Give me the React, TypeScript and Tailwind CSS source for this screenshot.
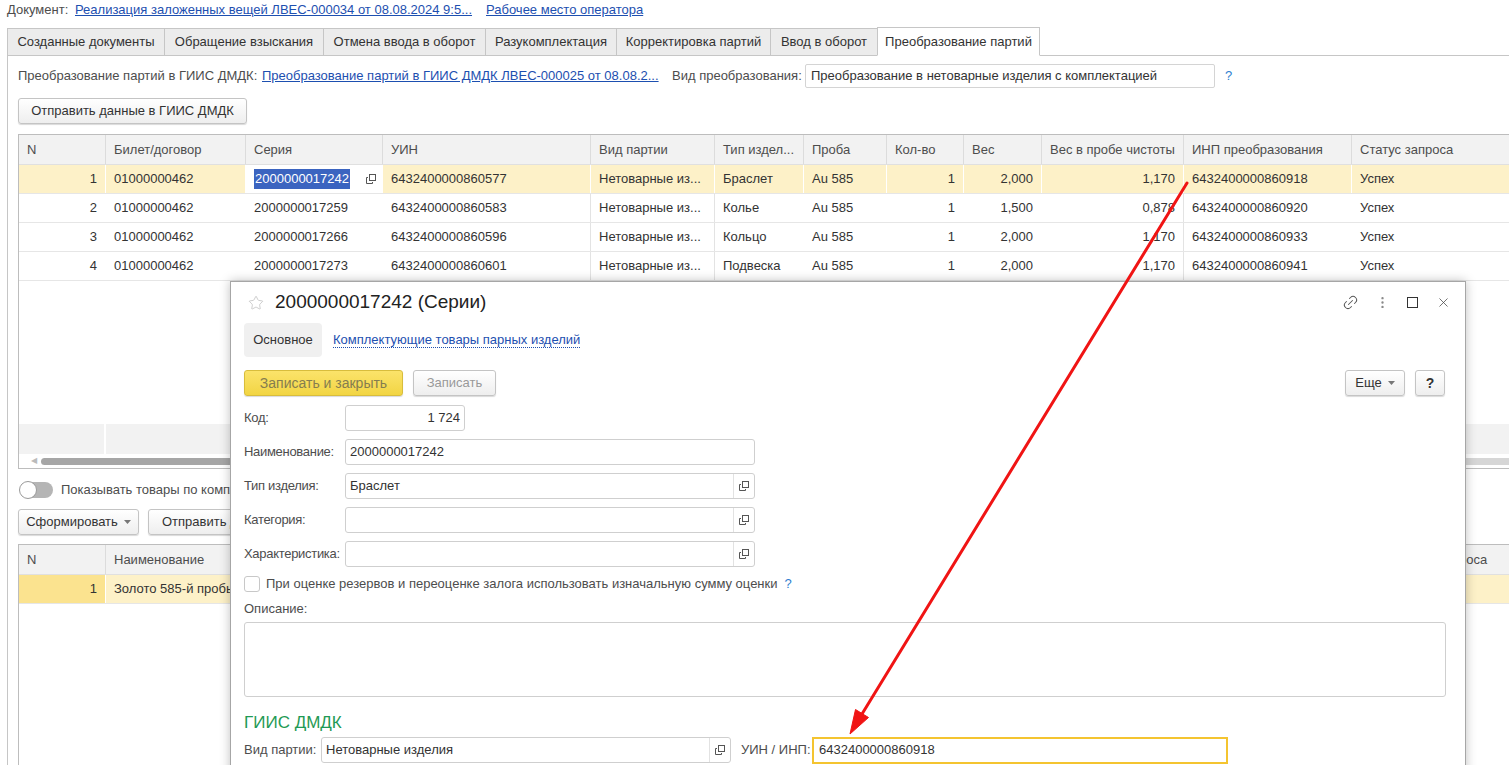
import React from 'react';
import { Link2, EllipsisVertical, X, Star } from 'lucide-react';

type Col = { title: string; w: number; right?: boolean; line?: boolean };

const cols: Col[] = [
    { title: 'N', w: 87, right: true },
    { title: 'Билет/договор', w: 140 },
    { title: 'Серия', w: 137 },
    { title: 'УИН', w: 208, line: true },
    { title: 'Вид партии', w: 124, line: true },
    { title: 'Тип издел...', w: 89 },
    { title: 'Проба', w: 83 },
    { title: 'Кол-во', w: 77, right: true },
    { title: 'Вес', w: 78, right: true },
    { title: 'Вес в пробе чистоты', w: 142, right: true, line: true },
    { title: 'ИНП преобразования', w: 168 },
    { title: 'Статус запроса', w: 170 },
];

const rows = [
    ['1', '01000000462', '2000000017242', '6432400000860577', 'Нетоварные из...', 'Браслет', 'Au 585', '1', '2,000', '1,170', '6432400000860918', 'Успех'],
    ['2', '01000000462', '2000000017259', '6432400000860583', 'Нетоварные из...', 'Колье', 'Au 585', '1', '1,500', '0,878', '6432400000860920', 'Успех'],
    ['3', '01000000462', '2000000017266', '6432400000860596', 'Нетоварные из...', 'Кольцо', 'Au 585', '1', '2,000', '1,170', '6432400000860933', 'Успех'],
    ['4', '01000000462', '2000000017273', '6432400000860601', 'Нетоварные из...', 'Подвеска', 'Au 585', '1', '2,000', '1,170', '6432400000860941', 'Успех'],
];

const tabs = [
    { t: 'Созданные документы', w: 157 },
    { t: 'Обращение взыскания', w: 159 },
    { t: 'Отмена ввода в оборот', w: 162 },
    { t: 'Разукомплектация', w: 131 },
    { t: 'Корректировка партий', w: 154 },
    { t: 'Ввод в оборот', w: 107 },
    { t: 'Преобразование партий', w: 163, active: true },
];

const CopyIcon = () => (
    <svg width="10" height="10" viewBox="0 0 10 10" fill="none" stroke="#555" strokeWidth="1">
        <rect x="3.5" y="0.5" width="6" height="6" />
        <path d="M2 3.5H0.5V9.5H6.5V8" />
    </svg>
);

const Caret = () => (
    <svg width="7" height="4" viewBox="0 0 7 4" className="ml-[6px]">
        <path d="M0 0H7L3.5 4Z" fill="#777" />
    </svg>
);

const Btn: React.FC<{ className?: string; children: React.ReactNode }> = ({ className = '', children }) => (
    <div className={`h-[26px] shrink-0 flex items-center justify-center rounded-[3px] border border-[#c4c4c4] bg-gradient-to-b from-white to-[#eeeeee] shadow-[0_1px_1px_rgba(0,0,0,0.15)] text-[#333] whitespace-nowrap ${className}`}>
        {children}
    </div>
);

const Field: React.FC<{ w: string; value?: string; right?: boolean; pick?: boolean; className?: string }> = ({ w, value = '', right, pick, className = '' }) => (
    <div className={`h-[26px] ${w} shrink-0 flex items-stretch rounded-[3px] border border-[#cfcfcf] bg-white ${className}`}>
        <div className={`flex-1 flex items-center px-[4px] text-[#333] ${right ? 'justify-end' : ''}`}>{value}</div>
        {pick && (
            <div className="w-[21px] border-l border-[#e2e2e2] flex items-center justify-center">
                <CopyIcon />
            </div>
        )}
    </div>
);

const FormRow: React.FC<{ label: string; children: React.ReactNode }> = ({ label, children }) => (
    <div className="flex items-center h-[26px]">
        <div className="w-[101px] shrink-0 text-[#4d4d4d] whitespace-nowrap tracking-[-0.3px]">{label}</div>
        {children}
    </div>
);

export default function App() {
    return (
        <div className="relative w-[1509px] h-[765px] overflow-hidden bg-white text-[13px] text-[#333] font-['Liberation_Sans',Arial,sans-serif]">
            {/* header */}
            <div className="h-[20px] flex items-center pl-[7px] whitespace-nowrap">
                <span className="w-[68px] text-[#4d4d4d]">Документ:</span>
                <span className="w-[411px] text-[#1d4fb0] underline">Реализация заложенных вещей ЛВЕС-000034 от 08.08.2024 9:5...</span>
                <span className="text-[#1d4fb0] underline">Рабочее место оператора</span>
            </div>

            {/* tabs */}
            <div className="mt-[8px] h-[27px] flex items-end pl-[7px] relative z-10">
                {tabs.map((tab) => (
                    <div
                        key={tab.t}
                        style={{ width: tab.w }}
                        className={`flex items-center justify-center border border-[#c6c6c6] border-r-0 last:border-r whitespace-nowrap ${tab.active ? 'h-[29px] bg-white border-b-white -mb-px text-[#333]' : 'h-[27px] bg-[#ececec] border-b-0 text-[#333]'}`}
                    >
                        {tab.t}
                    </div>
                ))}
            </div>

            {/* panel */}
            <div className="ml-[7px] border-l border-t border-[#c6c6c6] pl-[10px] h-[720px]">
                <div className="mt-[8px] h-[24px] flex items-center whitespace-nowrap">
                    <span className="w-[244px] text-[#4d4d4d]">Преобразование партий в ГИИС ДМДК:</span>
                    <span className="w-[410px] text-[#1d4fb0] underline">Преобразование партий в ГИИС ДМДК ЛВЕС-000025 от 08.08.2...</span>
                    <span className="w-[133px] text-[#4d4d4d]">Вид преобразования:</span>
                    <div className="w-[410px] h-[24px] border border-[#d4d4d4] rounded-[2px] flex items-center px-[5px] text-[#333]">
                        Преобразование в нетоварные изделия с комплектацией
                    </div>
                    <span className="ml-[10px] text-[#2f7fd0]">?</span>
                </div>

                <Btn className="mt-[10px] w-[229px]">Отправить данные в ГИИС ДМДК</Btn>

                {/* table 1 */}
                <div className="mt-[10px] w-[1510px] h-[335px] border border-[#bdbdbd] flex flex-col">
                    <div className="h-[30px] flex bg-[#f2f2f2] border-b border-[#e0e0e0] text-[#4d4d4d]">
                        {cols.map((c) => (
                            <div key={c.title} style={{ width: c.w }} className="shrink-0 flex items-center px-[8px] border-r border-[#dcdcdc] whitespace-nowrap">
                                {c.title}
                            </div>
                        ))}
                    </div>
                    {rows.map((r, ri) => {
                        const sel = ri === 0;
                        return (
                            <div key={ri} className={`flex h-[29px] border-b border-[#e6e6e6] ${sel ? 'bg-[#fdf1c8]' : ''}`}>
                                {r.map((v, ci) => {
                                    const c = cols[ci];
                                    const serial = sel && ci === 2;
                                    const line = sel ? 'border-white' : c.line ? 'border-[#e3e3e3]' : 'border-transparent';
                                    return (
                                        <div
                                            key={ci}
                                            style={{ width: c.w }}
                                            className={`shrink-0 flex items-center px-[8px] border-r ${line} whitespace-nowrap ${c.right ? 'justify-end' : ''} ${serial ? 'bg-white justify-between pr-[6px]' : ''}`}
                                        >
                                            {serial ? (
                                                <>
                                                    <span className="bg-[#3b64c0] text-white px-px">{v}</span>
                                                    <CopyIcon />
                                                </>
                                            ) : (
                                                v
                                            )}
                                        </div>
                                    );
                                })}
                            </div>
                        );
                    })}
                    <div className="flex-1" />
                    <div className="h-[30px] flex bg-[#f2f2f2]">
                        <div className="w-[87px] border-r-2 border-white" />
                        <div className="flex-1" />
                    </div>
                    <div className="h-[14px] flex items-center">
                        <span className="w-[22px] text-[8px] text-[#bbb] text-right pr-[4px]">◀</span>
                        <div className="w-[1150px] h-[7px] rounded-full bg-[#a6a6a6]" />
                        <div className="flex-1 h-[7px] bg-[#d6d6d6]" />
                    </div>
                </div>

                {/* toggle; the dialog covers everything right of x=230 */}
                <div className="mt-[12px] h-[17px] flex items-center">
                    <div className="relative shrink-0 w-[33px] h-[16px] rounded-full bg-[#b5b5b5] ml-[2px]">
                        <div className="absolute -left-px -top-px w-[18px] h-[18px] rounded-full bg-white border border-[#9a9a9a]" />
                    </div>
                    <span className="ml-[8px] text-[#4d4d4d] whitespace-nowrap">Показывать товары по компл</span>
                </div>

                <div className="mt-[11px] flex gap-[9px]">
                    <Btn className="w-[121px]">
                        Сформировать
                        <Caret />
                    </Btn>
                    <Btn className="w-[229px] justify-start! pl-[13px]">Отправить д</Btn>
                </div>

                {/* table 2 */}
                <div className="mt-[9px] w-[1510px] h-[240px] border border-[#bdbdbd]">
                    <div className="h-[30px] flex bg-[#f2f2f2] border-b border-[#e0e0e0] text-[#4d4d4d]">
                        <div className="w-[87px] shrink-0 flex items-center px-[8px] border-r border-[#dcdcdc]">N</div>
                        <div className="w-[1280px] shrink-0 flex items-center px-[8px] border-r border-[#dcdcdc]">Наименование</div>
                        <div className="flex-1 flex items-center px-[8px] whitespace-nowrap">Статус запроса</div>
                    </div>
                    <div className="h-[29px] flex bg-[#fdf1c8] border-b border-[#e6e6e6]">
                        <div className="w-[87px] shrink-0 flex items-center justify-end px-[8px] bg-[#fbe38f] border-r border-white">1</div>
                        <div className="flex items-center px-[8px] whitespace-nowrap">Золото 585-й пробы</div>
                    </div>
                </div>
            </div>

            {/* dialog */}
            <div className="absolute left-[230px] top-[281px] w-[1236px] h-[500px] bg-white border border-[#a6a6a6] shadow-[0_0_10px_rgba(0,0,0,0.25)] z-20 flex flex-col">
                <div className="h-[41px] flex items-center pl-[17px] pr-[14px]">
                    <Star size={16} strokeWidth={1} color="#b5b5b5" />
                    <span className="ml-[11px] text-[19px] text-[#222] whitespace-nowrap">2000000017242 (Серии)</span>
                    <div className="ml-auto flex items-center">
                        <Link2 size={17} strokeWidth={1.4} color="#555" className="-rotate-45" />
                        <EllipsisVertical size={15} strokeWidth={1.8} color="#888" className="ml-[16px]" />
                        <div className="ml-[17px] w-[11px] h-[11px] border border-[#333]" />
                        <X size={15} strokeWidth={1.2} color="#444" className="ml-[18px]" />
                    </div>
                </div>

                <div className="pl-[13px] pr-[20px] flex flex-col">
                    <div className="h-[34px] flex items-center">
                        <div className="w-[78px] h-[34px] rounded-[4px] bg-[#f0f0f0] flex items-center justify-center text-[#333]">Основное</div>
                        <span className="ml-[11px] text-[#1d4fb0] border-b border-dotted border-[#1d4fb0] leading-[14px]">Комплектующие товары парных изделий</span>
                    </div>

                    <div className="mt-[13px] flex items-center">
                        <div className="w-[159px] h-[26px] rounded-[3px] border border-[#d8bd3c] bg-gradient-to-b from-[#fbe36a] to-[#f2d542] shadow-[0_1px_1px_rgba(0,0,0,0.15)] flex items-center justify-center text-[14px] text-[#857d4f]">
                            Записать и закрыть
                        </div>
                        <Btn className="ml-[10px] w-[83px]">
                            <span className="text-[#999]">Записать</span>
                        </Btn>
                        <Btn className="ml-auto w-[60px]">
                            Еще
                            <Caret />
                        </Btn>
                        <Btn className="ml-[10px] w-[30px] text-[14px] font-bold">?</Btn>
                    </div>

                    <div className="mt-[9px] flex flex-col gap-[8px]">
                        <FormRow label="Код:">
                            <Field w="w-[120px]" value="1 724" right />
                        </FormRow>
                        <FormRow label="Наименование:">
                            <Field w="w-[410px]" value="2000000017242" />
                        </FormRow>
                        <FormRow label="Тип изделия:">
                            <Field w="w-[410px]" value="Браслет" pick />
                        </FormRow>
                        <FormRow label="Категория:">
                            <Field w="w-[410px]" pick />
                        </FormRow>
                        <FormRow label="Характеристика:">
                            <Field w="w-[410px]" pick />
                        </FormRow>
                    </div>

                    <div className="mt-[9px] h-[16px] flex items-center">
                        <div className="w-[16px] h-[16px] rounded-[3px] border border-[#c8c8c8] bg-white" />
                        <span className="ml-[6px] text-[#4d4d4d] whitespace-nowrap">При оценке резервов и переоценке залога использовать изначальную сумму оценки</span>
                        <span className="ml-[7px] text-[#2f7fd0]">?</span>
                    </div>

                    <div className="mt-[9px] h-[16px] flex items-center text-[#4d4d4d]">Описание:</div>
                    <div className="mt-[5px] h-[75px] w-[1202px] border border-[#cfcfcf] rounded-[3px]" />

                    <div className="mt-[16px] h-[20px] flex items-center text-[17px] text-[#1f9a55]">ГИИС ДМДК</div>

                    <div className="mt-[4px] h-[26px] flex items-center">
                        <span className="w-[77px] shrink-0 text-[#4d4d4d] whitespace-nowrap">Вид партии:</span>
                        <Field w="w-[410px]" value="Нетоварные изделия" pick />
                        <span className="ml-[10px] w-[71px] shrink-0 text-[#4d4d4d] whitespace-nowrap">УИН / ИНП:</span>
                        <div className="w-[416px] h-[27px] border-2 border-[#f4c430] flex items-center px-[5px] text-[#333]">6432400000860918</div>
                    </div>
                </div>
            </div>

            {/* red arrow */}
            <svg className="absolute left-0 top-0 z-30 pointer-events-none" width="1509" height="765">
                <line x1="1187" y1="183" x2="862" y2="714" stroke="#f01414" strokeWidth="3" strokeLinecap="round" />
                <path d="M850 734 L868.5 717.5 L855.5 709.5 Z" fill="#f01414" stroke="#f01414" strokeWidth="1" strokeLinejoin="round" />
            </svg>
        </div>
    );
}
